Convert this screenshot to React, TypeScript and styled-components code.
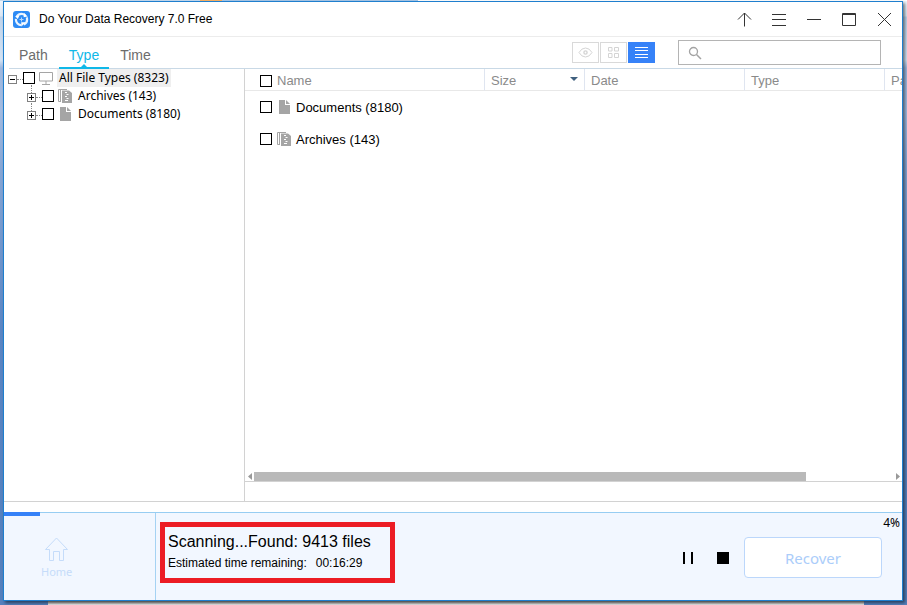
import React from "react";
import styled, { createGlobalStyle, css } from "styled-components";

const sans = `"Liberation Sans", Arial, sans-serif`;
const humanist = `"Noto Sans", "Open Sans", sans-serif`;

const GlobalStyle = createGlobalStyle`
  *, *::before, *::after { box-sizing: border-box; }
  html, body, #root { height: 100%; }
  body { margin: 0; font-family: ${sans}; font-size: 13px; color: #000; }
  button, input { font: inherit; margin: 0; }
`;

const Desktop = styled.div`
  height: 100vh;
  padding: 1px 4px 4px 3px;
  overflow: hidden;
  background:
    linear-gradient(90deg, #c5daf0 0 200px, #fbb264 200px 222px, #a9c8e8 222px 418px, #fff 418px) 0 0 / 100% 1px no-repeat,
    linear-gradient(#8f8f8f, #f0f0f0) 48px 100% / calc(100% - 91px) 4px no-repeat,
    linear-gradient(#f1f6fc 0, #dbe7f5 16px, #bfd4ec 17px, #d3e3f4 60px, #9db8e0 68px, #a3bce2 110px, #86a6d5 170px, #5b86c4 330px, #5580bd 100%);
`;

const Window = styled.div`
  height: 100%;
  display: flex;
  flex-direction: column;
  background: #fff;
  border: 1px solid #1f7fce;
  box-shadow: 2px 2px 3px rgba(0, 0, 0, 0.5);
`;

const TitleBar = styled.header`
  flex: none;
  height: 35px;
  display: flex;
  align-items: center;
  padding-left: 9px;
  border-bottom: 1px solid #ececec;
`;

const AppTitle = styled.h1`
  flex: 1;
  margin: 0 0 0 9px;
  font-size: 12px;
  font-weight: 400;
  line-height: 16px;
`;

const BareButton = styled.button`
  display: flex;
  align-items: center;
  justify-content: center;
  padding: 0;
  border: 0;
  background: none;
  color: #000;
  cursor: pointer;
`;

const WindowButton = styled(BareButton)`
  width: 35px;
  height: 34px;
  color: #333;
`;

const Toolbar = styled.div`
  flex: none;
  height: 32px;
  display: flex;
  align-items: center;
  margin-left: 5px;
  padding-right: 21px;
  border-bottom: 1px solid #c9d9e6;
`;

const Tabs = styled.nav`
  flex: 1;
  align-self: stretch;
  display: flex;
  gap: 1px;
`;

const Tab = styled.button<{ $active?: boolean }>`
  position: relative;
  height: 32px;
  padding: 6px 10px 0;
  border: 0;
  border-bottom: 2px solid transparent;
  background: none;
  color: #6c6c6c;
  font-size: 14px;
  line-height: 18px;
  cursor: pointer;
  ${(p) =>
    p.$active &&
    css`
      color: #10b8e8;
      border-bottom-color: #10b8e8;
      &::after {
        content: "";
        position: absolute;
        left: 50%;
        bottom: 0;
        margin-left: -3px;
        border: 3px solid transparent;
        border-top: 0;
        border-bottom-color: #10b8e8;
      }
    `}
`;

const ViewButtons = styled.div`
  display: flex;
  gap: 1px;
  margin-right: 23px;
`;

const ViewButton = styled(BareButton)<{ $active?: boolean }>`
  width: 27px;
  height: 21px;
  border: 1px solid ${(p) => (p.$active ? "#3682f8" : "#d9d9d9")};
  background: ${(p) => (p.$active ? "#3682f8" : "#fff")};
  color: ${(p) => (p.$active ? "#fff" : "#d4d4d4")};
`;

const SearchBox = styled.label`
  width: 203px;
  height: 25px;
  display: flex;
  align-items: center;
  gap: 6px;
  padding: 0 9px;
  border: 1px solid #b4b4b4;
`;

const SearchInput = styled.input`
  flex: 1;
  min-width: 0;
  padding: 0;
  border: 0;
  outline: 0;
  background: none;
`;

const Main = styled.main`
  flex: 1;
  min-height: 0;
  display: flex;
  border-bottom: 1px solid #d2d2d2;
`;

const TreePane = styled.aside`
  flex: none;
  width: 241px;
  border-right: 1px solid #d2d2d2;
`;

const TreeList = styled.ul`
  margin: 0;
  padding: 0;
  list-style: none;
  font-family: ${humanist};
  font-size: 12px;
`;

const TreeRow = styled.li<{ $level: number }>`
  position: relative;
  height: 18px;
  display: flex;
  align-items: center;
  padding-left: ${(p) => 4 + p.$level * 19}px;
  ${(p) =>
    p.$level > 0 &&
    css`
      &::before {
        content: "";
        position: absolute;
        left: 27px;
        top: -2px;
        height: 12px;
        border-left: 1px dotted #888;
      }
    `}
`;

const Expander = styled(BareButton)`
  position: relative;
  width: 9px;
  height: 9px;
  margin-top: 3px;
  border: 1px solid #808080;
  background: #fff;
`;

const Connector = styled.span`
  width: 6px;
  margin-top: 3px;
  border-top: 1px dotted #888;
`;

const Check = styled.input.attrs({ type: "checkbox" })`
  appearance: none;
  flex: none;
  width: 12px;
  height: 12px;
  border: 1px solid #000;
  background: #fff;
  &:checked { background: #3682f8; }
`;

const TreeLabel = styled.label<{ $selected?: boolean }>`
  display: flex;
  align-items: center;
  gap: 4px;
  margin-left: 4px;
  height: 18px;
  span {
    padding: 0 2px;
    line-height: 18px;
    background: ${(p) => (p.$selected ? "#efefef" : "none")};
  }
`;

const ListPane = styled.section`
  flex: 1;
  min-width: 0;
  display: flex;
  flex-direction: column;
`;

const ListView = styled.div`
  flex: 1;
  min-height: 0;
  overflow: hidden;
`;

const FileTable = styled.table`
  width: 760px;
  table-layout: fixed;
  border-collapse: separate;
  border-spacing: 0;
`;

const Column = styled.col<{ $width: number }>`
  width: ${(p) => p.$width}px;
`;

const HeadCell = styled.th`
  height: 22px;
  padding: 0 6px;
  border-right: 1px solid #dfe5f0;
  border-bottom: 1px solid #e8e8e8;
  color: #8a8a8a;
  font-weight: 400;
  text-align: left;
  &:first-child { padding-left: 15px; }
`;

const HeadContent = styled.div`
  display: flex;
  align-items: center;
  gap: 5px;
  padding-top: 2px;
  svg { margin: 0 0 3px auto; }
`;

const Cell = styled.td`
  height: 32px;
  padding: 0 0 0 15px;
`;

const CellContent = styled.label`
  display: flex;
  align-items: center;
  gap: 5px;
`;

const ScrollBar = styled.div`
  flex: none;
  height: 10px;
  display: flex;
  margin-bottom: 19px;
  border-bottom: 1px solid #d2d2d2;
`;

const ScrollArrow = styled(BareButton)`
  width: 9px;
  height: 9px;
`;

const ScrollTrack = styled.div`
  flex: 1;
`;

const ScrollThumb = styled.div`
  width: 86.4%;
  height: 9px;
  background: #b9b9b9;
`;

const Footer = styled.footer`
  position: relative;
  flex: none;
  height: 88px;
  margin-top: 10px;
  display: flex;
  background: #f2f7ff;
  border-top: 1px solid #97cdf2;
`;

const ProgressFill = styled.div`
  position: absolute;
  left: 0;
  top: -1px;
  height: 4px;
  background: #3682f8;
`;

const HomeArea = styled.div`
  flex: none;
  width: 152px;
  padding: 24px 0 0 37px;
  border-right: 1px solid #a5d2f3;
`;

const HomeButton = styled.button`
  display: flex;
  flex-direction: column;
  align-items: center;
  padding: 0;
  border: 0;
  background: none;
  color: #c5dcfa;
  font-family: ${humanist};
  font-size: 11px;
  line-height: 16px;
  gap: 2px;
`;

const StatusBox = styled.section`
  align-self: flex-start;
  width: 235px;
  height: 61px;
  margin: 9px 0 0 4px;
  padding: 5px 0 0 3px;
  border: 5px solid #ec1c24;
  white-space: nowrap;
`;

const StatusTitle = styled.p`
  margin: 0;
  font-size: 16px;
  line-height: 20px;
`;

const StatusDetail = styled.p`
  display: flex;
  gap: 9px;
  margin: 0;
  padding-top: 2px;
  font-size: 12px;
  line-height: 18px;
`;

const ActionArea = styled.div`
  margin-left: auto;
  padding: 0 2px 0 0;
`;

const Percent = styled.p`
  margin: 0;
  height: 24px;
  padding-top: 1px;
  font-family: ${humanist};
  font-size: 12px;
  line-height: 18px;
  text-align: right;
`;

const Actions = styled.div`
  display: flex;
  align-items: center;
  padding-right: 18px;
`;

const ScanButton = styled(BareButton)`
  width: 35px;
  height: 24px;
`;

const RecoverButton = styled.button`
  width: 138px;
  height: 41px;
  margin-left: 4px;
  border: 1px solid #bcd7fb;
  border-radius: 4px;
  background: #fff;
  color: #abcdfa;
  font-family: ${humanist};
  font-size: 15px;
  line-height: 20px;
`;

const LogoIcon = () => (
  <svg width="17" height="17" viewBox="0 0 17 17" fill="none" aria-hidden="true">
    <rect width="17" height="17" rx="3" fill="#2e8bf5" />
    <circle cx="8.5" cy="8.5" r="5.6" stroke="#eaf4ff" strokeWidth="2.2" strokeDasharray="9.2 2.5" strokeDashoffset="3" />
    <path d="M2 5.2 6.5 4.4 4.8 8zM11 2l3.8 3.4-4.2.8zM12.8 11.2 8.4 15.4l-.2-4.2z" fill="#fff" />
    <path d="M8.5 6.5v4M6.5 8.5h4" stroke="#b8d8fb" />
  </svg>
);

const ArrowUpIcon = () => (
  <svg width="15" height="15" viewBox="0 0 15 15" fill="none" stroke="currentColor" aria-hidden="true">
    <path d="M7.5 1v13.5M1 7.5 7.5 1 14 7.5" />
  </svg>
);
const MenuIcon = () => (
  <svg width="15" height="15" viewBox="0 0 15 15" stroke="currentColor" aria-hidden="true">
    <path d="M0 2.5h14M0 7.5h14M0 13.5h14" />
  </svg>
);
const MinimizeIcon = () => (
  <svg width="15" height="15" viewBox="0 0 15 15" stroke="currentColor" aria-hidden="true">
    <path d="M0 7.5h14" />
  </svg>
);
const MaximizeIcon = () => (
  <svg width="15" height="15" viewBox="0 0 15 15" fill="none" stroke="currentColor" aria-hidden="true">
    <path d="M.5 1.5h13v12H.5zM1 2.5h12" />
  </svg>
);
const CloseIcon = () => (
  <svg width="15" height="15" viewBox="0 0 15 15" stroke="currentColor" aria-hidden="true">
    <path d="m1 1 13 13M14 1 1 14" />
  </svg>
);

const EyeIcon = () => (
  <svg width="15" height="11" viewBox="0 0 15 11" fill="none" stroke="currentColor" aria-hidden="true">
    <path d="M1 5.5Q3.6 1 7.5 1T14 5.5Q11.4 10 7.5 10T1 5.5z" />
    <circle cx="7.5" cy="5.5" r="1.6" strokeWidth="1.4" />
  </svg>
);
const GridIcon = () => (
  <svg width="11" height="11" viewBox="0 0 11 11" fill="none" stroke="currentColor" aria-hidden="true">
    <path d="M.5.5h3.5v3.5H.5zM6.500.5H10.500v3.500h-4zM.5 6.500h3.500v4H.5zM6.500 6.500h4v4h-4z" />
  </svg>
);
const LinesIcon = () => (
  <svg width="13" height="11" viewBox="0 0 13 11" stroke="currentColor" aria-hidden="true">
    <path d="M0 .5h13M0 3.5h13M0 7.500h13M0 10.500h13" />
  </svg>
);
const SearchIcon = () => (
  <svg width="14" height="14" viewBox="0 0 14 14" fill="none" stroke="#a3a3a3" aria-hidden="true">
    <circle cx="5.500" cy="5.500" r="4" strokeWidth="1.300" />
    <path d="m8.500 8.500 4.500 4.500" strokeWidth="1.500" />
  </svg>
);

const MonitorIcon = () => (
  <svg width="14" height="14" viewBox="0 0 14 14" fill="none" stroke="#a5a5a5" aria-hidden="true">
    <path d="M.5 1.500h13v8.500H.5zM7 10v3M3 13.500h8" />
  </svg>
);
const ArchiveIcon = () => (
  <svg width="14" height="14" viewBox="0 0 14 14" fill="none" aria-hidden="true">
    <path d="M2.500 12.500h-2V.5h8.500M2.500 1v12" stroke="#a5a5a5" />
    <path d="M4 1.500h7L14 4v10H4z" fill="#a5a5a5" />
    <path d="M7 3.500h2M8.500 5.500h2M7 7.500h2M8.500 9.500h2M7 11.500h3" stroke="#fff" />
  </svg>
);
const DocumentIcon = () => (
  <svg width="14" height="14" viewBox="0 0 14 14" aria-hidden="true">
    <path d="M2 0h6v5h5v9H2zM9 0l4 4H9z" fill="#a5a5a5" />
  </svg>
);

const HomeIcon = () => (
  <svg width="25" height="25" viewBox="0 0 25 25" fill="none" stroke="currentColor" aria-hidden="true">
    <path d="M12.500 1 1.500 12.500h4v11h4v-9h6v9h4v-11h4z" />
  </svg>
);

const icons = { archive: ArchiveIcon, document: DocumentIcon, monitor: MonitorIcon };
type IconName = keyof typeof icons;

const treeItems: { label: string; icon: IconName; level: number; open?: boolean }[] = [
  { label: "All File Types (8323)", icon: "monitor", level: 0, open: true },
  { label: "Archives (143)", icon: "archive", level: 1 },
  { label: "Documents (8180)", icon: "document", level: 1 },
];

const files: { label: string; icon: IconName }[] = [
  { label: "Documents (8180)", icon: "document" },
  { label: "Archives (143)", icon: "archive" },
];

const percent = 4;

export default function App() {
  return (
    <Desktop>
      <GlobalStyle />
      <Window>
        <TitleBar>
          <LogoIcon />
          <AppTitle>Do Your Data Recovery 7.0 Free</AppTitle>
          <WindowButton aria-label="Upgrade"><ArrowUpIcon /></WindowButton>
          <WindowButton aria-label="Menu"><MenuIcon /></WindowButton>
          <WindowButton aria-label="Minimize"><MinimizeIcon /></WindowButton>
          <WindowButton aria-label="Maximize"><MaximizeIcon /></WindowButton>
          <WindowButton aria-label="Close"><CloseIcon /></WindowButton>
        </TitleBar>

        <Toolbar>
          <Tabs>
            <Tab>Path</Tab>
            <Tab $active>Type</Tab>
            <Tab>Time</Tab>
          </Tabs>
          <ViewButtons>
            <ViewButton aria-label="Preview"><EyeIcon /></ViewButton>
            <ViewButton aria-label="Thumbnails"><GridIcon /></ViewButton>
            <ViewButton aria-label="List" $active><LinesIcon /></ViewButton>
          </ViewButtons>
          <SearchBox>
            <SearchIcon />
            <SearchInput type="text" aria-label="Search" />
          </SearchBox>
        </Toolbar>

        <Main>
          <TreePane>
            <TreeList>
              {treeItems.map((item, i) => {
                const Icon = icons[item.icon];
                return (
                  <TreeRow key={item.label} $level={item.level}>
                    <Expander aria-label={item.open ? "Collapse" : "Expand"}>
                      <svg width="5" height="5" viewBox="0 0 5 5" stroke="#000" aria-hidden="true">
                        <path d={item.open ? "M0 2.5h5" : "M0 2.5h5M2.5 0v5"} />
                      </svg>
                    </Expander>
                    <Connector />
                    <Check id={`tree-${i}`} />
                    <TreeLabel htmlFor={`tree-${i}`} $selected={item.level === 0}>
                      <Icon />
                      <span>{item.label}</span>
                    </TreeLabel>
                  </TreeRow>
                );
              })}
            </TreeList>
          </TreePane>

          <ListPane>
            <ListView>
              <FileTable>
                <colgroup>
                  <Column $width={240} />
                  <Column $width={100} />
                  <Column $width={160} />
                  <Column $width={140} />
                  <Column $width={120} />
                </colgroup>
                <thead>
                  <tr>
                    <HeadCell>
                      <HeadContent>
                        <Check aria-label="Select all" />
                        Name
                      </HeadContent>
                    </HeadCell>
                    <HeadCell>
                      <HeadContent>
                        Size
                        <svg width="8" height="4" viewBox="0 0 8 4" aria-hidden="true">
                          <path d="M0 0h8L4 4z" fill="#40607f" />
                        </svg>
                      </HeadContent>
                    </HeadCell>
                    <HeadCell><HeadContent>Date</HeadContent></HeadCell>
                    <HeadCell><HeadContent>Type</HeadContent></HeadCell>
                    <HeadCell><HeadContent>Path</HeadContent></HeadCell>
                  </tr>
                </thead>
                <tbody>
                  {files.map((file) => {
                    const Icon = icons[file.icon];
                    return (
                      <tr key={file.label}>
                        <Cell colSpan={5}>
                          <CellContent>
                            <Check />
                            <Icon />
                            {file.label}
                          </CellContent>
                        </Cell>
                      </tr>
                    );
                  })}
                </tbody>
              </FileTable>
            </ListView>
            <ScrollBar>
              <ScrollArrow aria-label="Scroll left">
                <svg width="4" height="7" viewBox="0 0 4 7" aria-hidden="true"><path d="M4 0v7L0 3.500z" fill="#999" /></svg>
              </ScrollArrow>
              <ScrollTrack><ScrollThumb /></ScrollTrack>
              <ScrollArrow aria-label="Scroll right">
                <svg width="4" height="7" viewBox="0 0 4 7" aria-hidden="true"><path d="M0 0v7l4-3.500z" fill="#999" /></svg>
              </ScrollArrow>
            </ScrollBar>
          </ListPane>
        </Main>

        <Footer>
          <ProgressFill role="progressbar" aria-label="Scan progress" aria-valuenow={percent} style={{ width: `${percent}%` }} />
          <HomeArea>
            <HomeButton><HomeIcon />Home</HomeButton>
          </HomeArea>
          <StatusBox>
            <StatusTitle>Scanning...Found: 9413 files</StatusTitle>
            <StatusDetail>
              <span>Estimated time remaining:</span>
              <span>00:16:29</span>
            </StatusDetail>
          </StatusBox>
          <ActionArea>
            <Percent>{percent}%</Percent>
            <Actions>
              <ScanButton aria-label="Pause">
                <svg width="10" height="12" viewBox="0 0 10 12" aria-hidden="true"><path d="M0 0h2v12H0zM8 0h2v12H8z" /></svg>
              </ScanButton>
              <ScanButton aria-label="Stop">
                <svg width="12" height="12" viewBox="0 0 12 12" aria-hidden="true"><path d="M0 0h12v12H0z" /></svg>
              </ScanButton>
              <RecoverButton>Recover</RecoverButton>
            </Actions>
          </ActionArea>
        </Footer>
      </Window>
    </Desktop>
  );
}
